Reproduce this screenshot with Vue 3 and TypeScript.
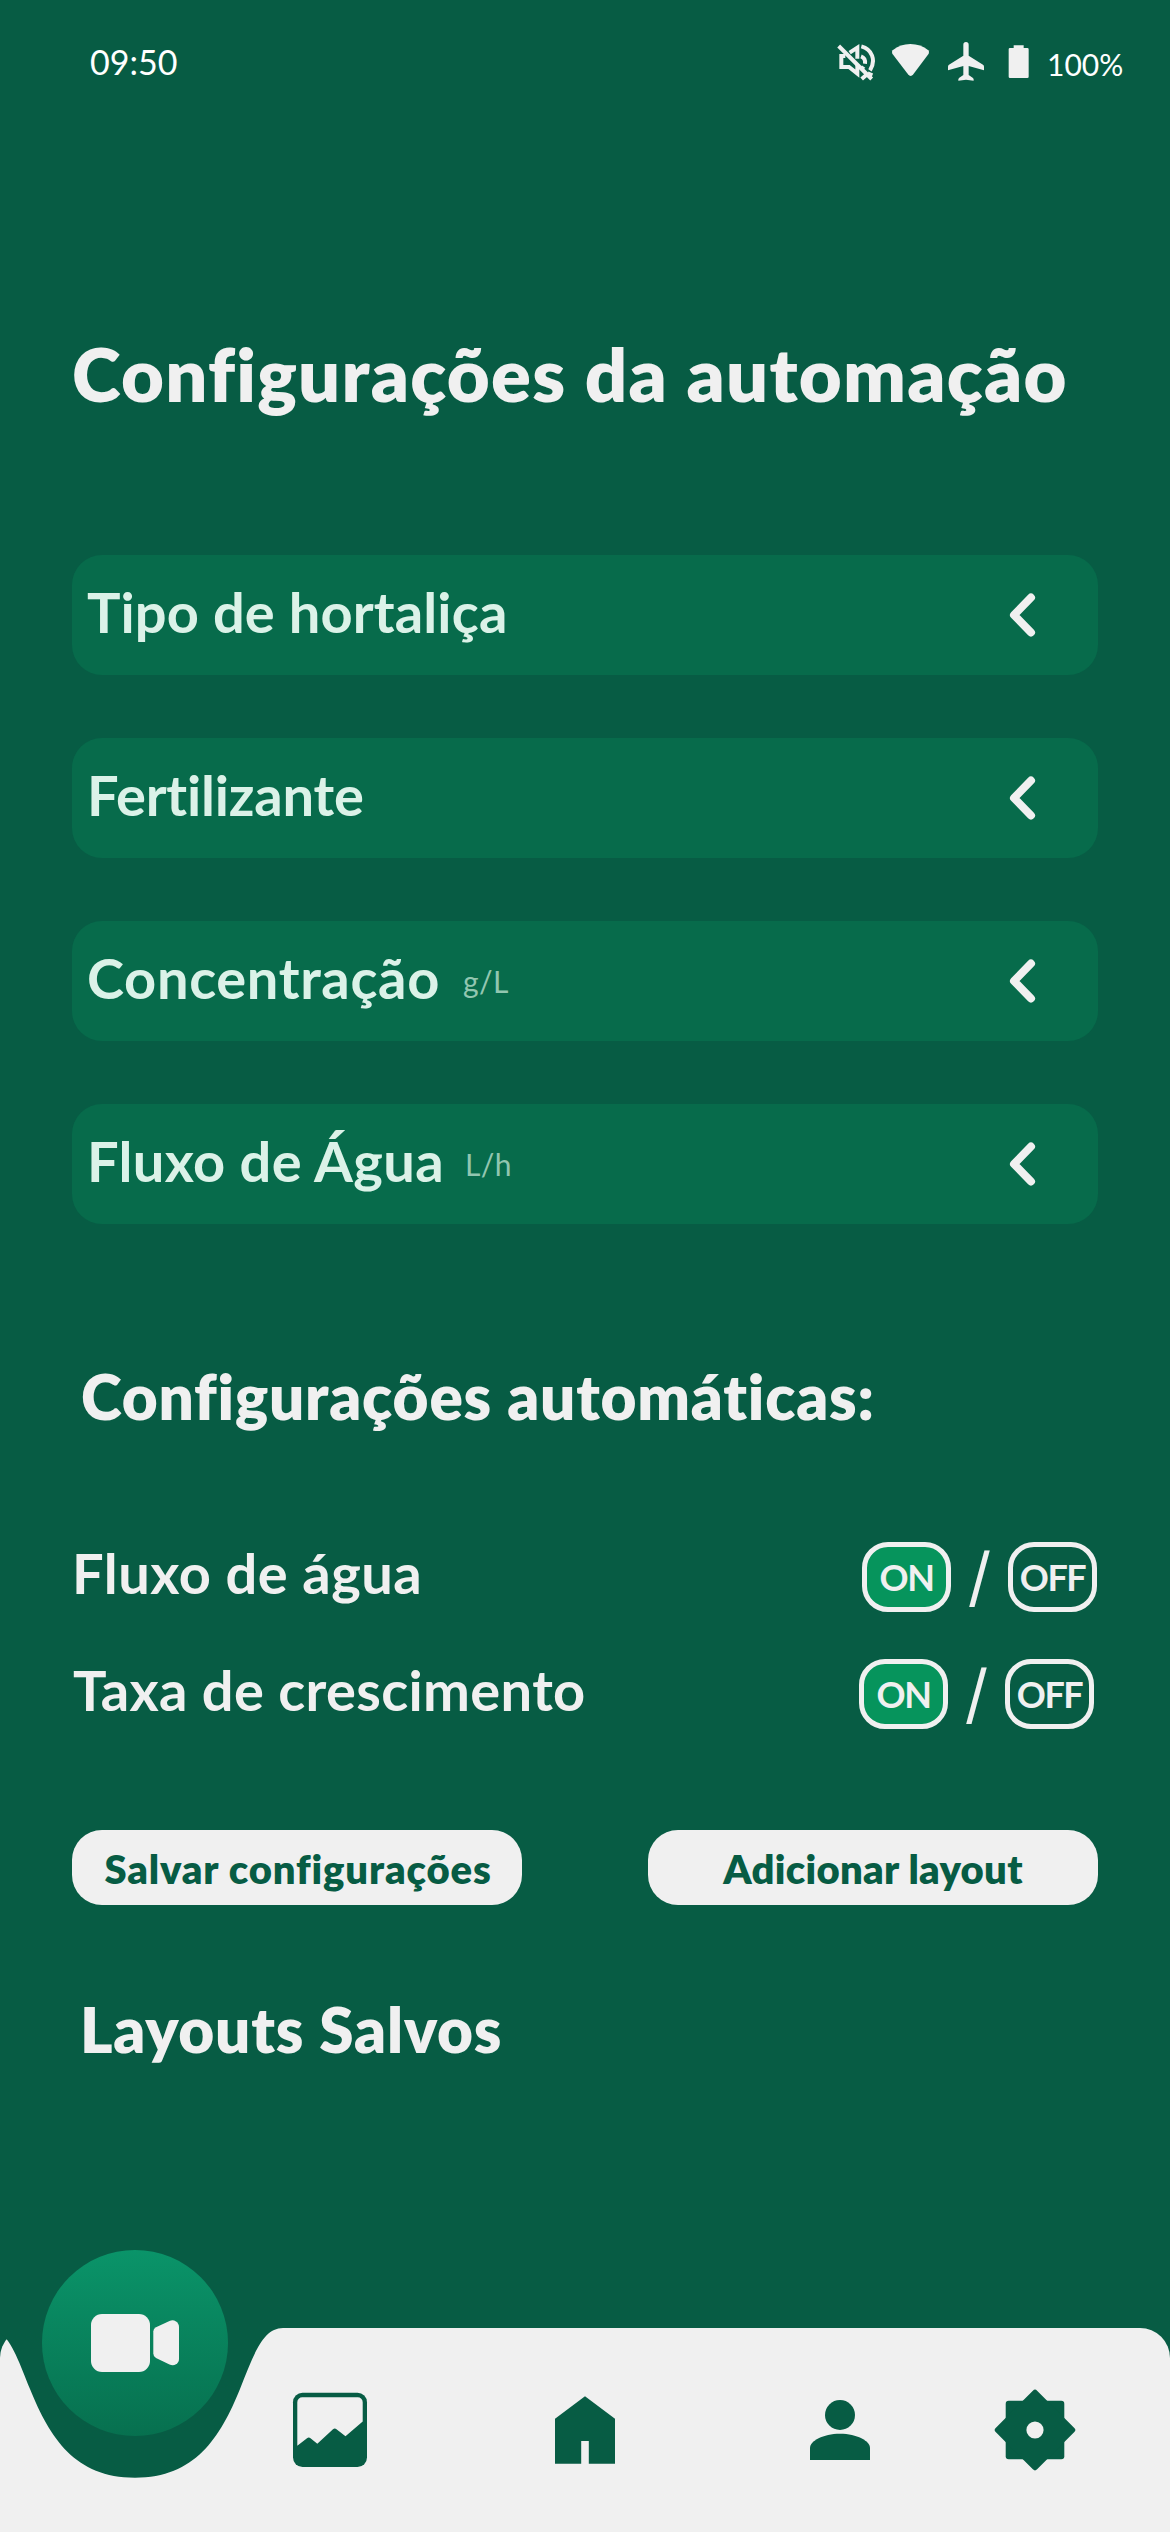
<script setup lang="ts">
import { reactive } from 'vue'

interface Field {
  label: string
  unit?: string
  fit: string
}

interface AutoSetting {
  label: string
  on: boolean
  fit: string
}

const fields: Field[] = [
  { label: 'Tipo de hortaliça', fit: 'fit-type' },
  { label: 'Fertilizante', fit: 'fit-fertilizer' },
  { label: 'Concentração', unit: 'g/L', fit: 'fit-concentration' },
  { label: 'Fluxo de Água', unit: 'L/h', fit: 'fit-flow' },
]

const settings = reactive<AutoSetting[]>([
  { label: 'Fluxo de água', on: true, fit: 'fit-water' },
  { label: 'Taxa de crescimento', on: true, fit: 'fit-growth' },
])
</script>

<template>
  <div class="screen">
    <header class="status">
      <span class="time">09:50</span>
      <svg class="mute" width="40" height="42" viewBox="108 63 120 126">
        <g fill="none" stroke="#f0f0f0" stroke-width="12">
          <path d="M116 78 215 177" />
          <path d="M136 108H124V141H147L172 161V134" />
          <path d="M149 98 172 83V116" />
          <path d="M183 109Q197 114 195 131" />
          <path d="M183 146Q188 144 191 140" />
          <path d="M184 79C216 87 229 121 210 151" />
          <path d="M185 177 203 161M203 160 217 166" />
        </g>
      </svg>
      <svg class="wifi" width="39" height="42" viewBox="273 63 117 126">
        <path d="M278 91Q301 72 331 72Q362 72 385 91Q389 95 386 101L340 163Q332 173 324 163L277 101Q274 95 278 91Z" fill="#f0f0f0" />
      </svg>
      <svg class="plane" width="38" height="42" viewBox="441 63 114 126">
        <path d="M490 74Q490 66 498 66Q506 66 506 74V107L549 134Q552 136 552 140V151L506 138V165L519 174Q522 177 521 182L498 179 475 182Q474 177 477 174L490 165V138L444 151V140Q444 136 447 134L490 107Z" fill="#f0f0f0" />
      </svg>
      <svg class="battery" width="21" height="42" viewBox="624 63 63 126">
        <path d="M641 76H671V84H682Q686 84 686 88V170Q686 174 682 174H630Q626 174 626 170V88Q626 84 630 84H641Z" fill="#f0f0f0" />
      </svg>
      <span class="charge">100%</span>
    </header>

    <main>
      <h1>Configurações da automação</h1>

      <section class="fields">
        <button v-for="field in fields" :key="field.label" class="field" type="button">
          <span class="label" :class="field.fit">{{ field.label }}</span>
          <span v-if="field.unit" class="unit">{{ field.unit }}</span>
          <svg class="chevron" width="30" height="48" viewBox="0 0 30 48">
            <path d="M25 6.500 8 24 25 41.500" />
          </svg>
        </button>
      </section>

      <h2 class="auto-title">Configurações automáticas:</h2>

      <section class="settings">
        <div v-for="setting in settings" :key="setting.label" class="setting">
          <span class="setting-label" :class="setting.fit">{{ setting.label }}</span>
          <div class="switch">
            <button type="button" class="option" :class="{ active: setting.on }" @click="setting.on = true">ON</button>
            <span class="slash">/</span>
            <button type="button" class="option" :class="{ active: !setting.on }" @click="setting.on = false">OFF</button>
          </div>
        </div>
      </section>

      <section class="actions">
        <button type="button" class="action save">Salvar configurações</button>
        <button type="button" class="action add">Adicionar layout</button>
      </section>

      <h2 class="layouts-title">Layouts Salvos</h2>
    </main>

    <nav class="nav">
      <svg class="nav-shape" width="1170" height="282" viewBox="0 0 1170 282">
        <path d="M0 282V108A30 30 0 0 1 30 78H1140A30 30 0 0 1 1170 108V282Z" fill="#f0f0f0" />
        <path d="M-13 77V78C8 78 17 107 30 139C50 188 75 227.700 135 227.700S220 188 240 139C253 107 262 78 283 78V77Z" fill="#075c44" />
      </svg>
      <button type="button" class="camera">
        <svg width="186" height="186" viewBox="0 0 186 186" fill="#f0f0f0">
          <rect x="49" y="64" width="59" height="58" rx="11" />
          <path d="M111.300 81.500Q111.300 78.500 114 77.200L127.500 71Q131 69.500 134 71.500Q137 73.500 137 77V109Q137 112.500 134 114.300Q131 116 127.500 114.500L114 108Q111.300 106.500 111.300 103.500Z" />
        </svg>
      </button>
      <svg class="item gallery" width="84" height="84" viewBox="0 0 84 84">
        <rect x="5" y="4.800" width="74" height="74.200" rx="9.500" fill="#075c44" />
        <path d="M9.300 57.700V14.300A5 5 0 0 1 14.300 9.300H69.700A5 5 0 0 1 74.700 14.300V33.500L57.500 48.300 48.500 41.200Q46.800 39.900 45 41.200L29.300 55.700 22.500 50.200Q20.800 48.900 19 50.200Z" fill="#f0f0f0" />
      </svg>
      <svg class="item home" width="84" height="84" viewBox="0 0 84 84">
        <path d="M42 8.300 72 30.800V75.700H45.800V53H38.200V75.700H12V30.800Z" fill="#075c44" />
      </svg>
      <svg class="item profile" width="84" height="84" viewBox="0 0 84 84" fill="#075c44">
        <circle cx="42" cy="27" r="15" />
        <path d="M12 72V60C12 53 25 45.800 42 45.800S72 53 72 60V72Z" />
      </svg>
      <svg class="item settings-icon" width="84" height="84" viewBox="0 0 84 84" fill="#075c44">
        <rect x="12.700" y="12.700" width="58.600" height="58.600" rx="3" />
        <rect x="12.700" y="12.700" width="58.600" height="58.600" rx="3" transform="rotate(45 42 42)" />
        <circle cx="42" cy="42" r="8.600" fill="#f0f0f0" />
      </svg>
    </nav>
  </div>
</template>

<style>
body {
  background: #075c44;
}
</style>

<style scoped>
.screen {
  box-sizing: border-box;
  display: flex;
  flex-direction: column;
  width: 1170px;
  height: 2532px;
  overflow: hidden;
  background: #075c44;
  color: #f0f0f0;
  font-family: Lato, "Open Sans", sans-serif;
}

button {
  margin: 0;
  padding: 0;
  border: 0;
  color: inherit;
  font: inherit;
  text-align: left;
}

.status {
  display: flex;
  align-items: flex-start;
  box-sizing: border-box;
  height: 126px;
  padding: 41px 0 0 90px;
  color: #fff;
}

.time {
  flex: 0 0 746px;
  font-size: 34px;
  line-height: 42px;
}

.wifi {
  margin-left: 15px;
}

.plane {
  margin-left: 17px;
}

.battery {
  margin-left: 23px;
}

.charge {
  margin-left: 18px;
  font-size: 30px;
  line-height: 46px;
}

main {
  display: flex;
  flex-direction: column;
  padding: 205px 72px 0;
}

h1,
h2 {
  margin: 0;
  font-weight: 800;
  white-space: nowrap;
}

h1 {
  font-size: 74px;
  line-height: 86px;
  letter-spacing: 1.25px;
}

h2 {
  font-size: 62px;
  line-height: 72px;
  letter-spacing: 0.8px;
}

.fields {
  display: flex;
  flex-direction: column;
  gap: 63px;
  margin-top: 138px;
}

.field {
  display: flex;
  align-items: flex-start;
  box-sizing: border-box;
  height: 120px;
  padding: 0 62px 0 15px;
  border-radius: 30px;
  background: #076b4b;
  color: #dbf2e8;
}

.label {
  font-size: 56px;
  font-weight: 700;
  line-height: 114px;
}

.fit-type {
  letter-spacing: 0.15px;
}

.fit-fertilizer {
  letter-spacing: -0.2px;
}

.fit-concentration {
  letter-spacing: 0.65px;
}

.fit-flow {
  letter-spacing: 0.35px;
}

.unit {
  margin-left: 21px;
  color: #92c6b0;
  font-size: 30px;
  line-height: 121px;
  letter-spacing: 0.4px;
}

.fit-concentration + .unit {
  margin-left: 23px;
}

.chevron {
  align-self: center;
  margin-left: auto;
  fill: none;
  stroke: #f0f0f0;
  stroke-width: 8;
  stroke-linecap: round;
  stroke-linejoin: round;
}

.auto-title {
  margin: 136px 0 0 9px;
}

.settings {
  display: flex;
  flex-direction: column;
  gap: 47px;
  margin-top: 110px;
}

.setting {
  display: flex;
  align-items: flex-start;
  justify-content: space-between;
  height: 70px;
}

.setting-label {
  font-size: 56px;
  font-weight: 700;
  line-height: 61px;
}

.fit-water {
  letter-spacing: 0.5px;
}

.fit-growth {
  margin-left: 1px;
  letter-spacing: 0.35px;
}

.switch {
  display: flex;
  align-items: center;
  height: 70px;
  margin-right: 1px;
}

.setting + .setting .switch {
  margin-right: 4px;
}

.option {
  box-sizing: border-box;
  width: 89px;
  height: 70px;
  border: 5px solid #f0f0f0;
  border-radius: 26px;
  background: transparent;
  font-size: 36px;
  font-weight: 700;
  line-height: 56px;
  letter-spacing: -1.5px;
  text-align: center;
}

.option.active {
  background: #06945c;
}

.slash {
  width: 57px;
  font-family: Inter, sans-serif;
  font-size: 65px;
  line-height: 64px;
  text-align: center;
}

.actions {
  display: flex;
  justify-content: space-between;
  margin-top: 101px;
}

.action {
  width: 450px;
  height: 75px;
  border-radius: 30px;
  background: #f0f0f0;
  color: #075c44;
  font-size: 40px;
  font-weight: 800;
  line-height: 78px;
  text-align: center;
}

.save {
  padding-left: 2px;
  letter-spacing: 0.85px;
}

.add {
  letter-spacing: 0.3px;
}

.layouts-title {
  margin: 88px 0 0 8px;
}

.nav {
  position: relative;
  display: flex;
  align-items: flex-start;
  box-sizing: border-box;
  height: 282px;
  margin-top: auto;
  padding-left: 42px;
}

.nav-shape {
  position: absolute;
  inset: 0;
}

.camera {
  position: relative;
  width: 186px;
  height: 186px;
  border-radius: 50%;
  background: linear-gradient(#0a9469, #07704f);
}

.camera svg {
  display: block;
}

.item {
  position: relative;
  margin-top: 138px;
}

.gallery {
  margin-left: 60px;
}

.home,
.profile {
  margin-left: 171px;
}

.settings-icon {
  margin-left: 111px;
}
</style>
